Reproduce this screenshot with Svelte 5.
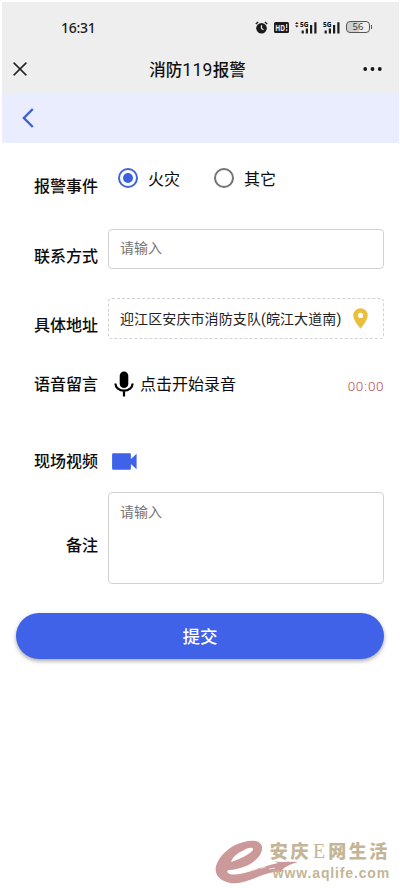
<script>
  let type = $state('fire');
  let contact = $state('');
  let address = $state('迎江区安庆市消防支队(皖江大道南)');
  let remark = $state('');

  const types = [
    { value: 'fire', label: '火灾' },
    { value: 'other', label: '其它' }
  ];
</script>

{#snippet signal()}
  <text x="0" y="5.8" font-size="7.5" font-weight="700" textLength="8.5" lengthAdjust="spacingAndGlyphs">5G</text>
  <path d="M2.7 9.5v3M6.9 7.5v5M11.1 4v8.5M15.4 1.2v11.3" stroke="#1c1c1c" stroke-width="2.2" />
{/snippet}

<div class="page">
  <header>
    <div class="status">
      <span class="time">16:31</span>
      <div class="status-icons">
        <svg class="alarm" width="13" height="13" viewBox="0 0 13 13">
          <circle cx="6.5" cy="7.2" r="5.3" fill="#1c1c1c" />
          <path d="M.8 3 3.2 1M9.8 1l2.4 2" stroke="#1c1c1c" stroke-width="1.4" />
          <path d="M6.5 4.2v3.3l2 1.3" fill="none" stroke="#eee" stroke-width="1.2" />
        </svg>
        <svg class="hd" width="15" height="11" viewBox="0 0 15 11">
          <rect width="15" height="11" rx="1.5" fill="#1c1c1c" />
          <text x="1.2" y="8.7" font-size="8.5" font-weight="700" fill="#eee" textLength="9.8" lengthAdjust="spacingAndGlyphs">HD</text>
          <path d="M12.7 2v4M12.7 7.3v1.6" stroke="#eee" stroke-width="1.1" />
        </svg>
        <svg class="sim1" width="22" height="19" viewBox="-5 -3 22 19">
          <path d="m-5 3.1 1.8-2 1.8 2zM-5 4.4l1.8 2 1.8-2z" fill="#1c1c1c" />
          {@render signal()}
        </svg>
        <svg class="sim2" width="17" height="19" viewBox="0 -3 17 19">
          {@render signal()}
        </svg>
        <span class="battery">56</span>
      </div>
    </div>

    <div class="titlebar">
      <svg width="14" height="14" viewBox="0 0 14 14">
        <path d="M.6.6l12.8 12.8M13.4.6.6 13.4" stroke="#222" stroke-width="1.5" />
      </svg>
      <h1>消防<span>119</span>报警</h1>
      <svg width="19" height="4" viewBox="0 0 19 4" fill="#151515">
        <circle cx="2.2" cy="2" r="1.9" />
        <circle cx="9.5" cy="2" r="1.9" />
        <circle cx="16.8" cy="2" r="1.9" />
      </svg>
    </div>
  </header>

  <nav>
    <svg width="12" height="20" viewBox="0 0 12 20">
      <path d="M10.8 1 1.9 10l8.9 9" fill="none" stroke="#3f62cc" stroke-width="2.4" />
    </svg>
  </nav>

  <form onsubmit={(e) => e.preventDefault()}>
    <div class="row event">
      <span class="label">报警事件</span>
      <div class="field radios">
        {#each types as item}
          <label class="radio">
            <input type="radio" name="type" value={item.value} bind:group={type} />
            <i class="dot" class:checked={type === item.value}></i>
            {item.label}
          </label>
        {/each}
      </div>
    </div>

    <div class="row contact">
      <span class="label">联系方式</span>
      <input class="field box" placeholder="请输入" bind:value={contact} />
    </div>

    <div class="row address">
      <span class="label">具体地址</span>
      <div class="field box dashed">
        <span>{address}</span>
        <svg width="15" height="21" viewBox="0 0 15 21">
          <path
            d="M7.5.2A7.2 7.2 0 0 0 .3 7.4C.3 12.7 7.5 20.5 7.5 20.5s7.2-7.8 7.2-13.1A7.2 7.2 0 0 0 7.5.2zm0 4.6a2.6 2.6 0 1 1 0 5.2 2.6 2.6 0 0 1 0-5.2z"
            fill="#e9bf3b"
          />
        </svg>
      </div>
    </div>

    <div class="row voice">
      <span class="label">语音留言</span>
      <div class="field record">
        <svg width="20" height="26" viewBox="0 0 20 26">
          <rect x="5.7" y=".5" width="8.6" height="16.5" rx="4.3" />
          <path d="M1.4 12.5a8.6 7.2 0 0 0 17.2 0M10 20v5.5" fill="none" stroke="#000" stroke-width="2.2" />
        </svg>
        <span>点击开始录音</span>
        <span class="timer">00<i>:</i>00</span>
      </div>
    </div>

    <div class="row video">
      <span class="label">现场视频</span>
      <div class="field camera">
        <svg width="25" height="17" viewBox="0 0 25 17" fill="#3f62e8">
          <path d="M1.3.2h16.4q1.2 0 1.2 1.2v4.5l5.7-5.2v15.6l-5.7-5.2v4.5q0 1.2-1.2 1.2H1.3q-1.2 0-1.2-1.2V1.4Q.1.2 1.3.2z" />
        </svg>
      </div>
    </div>

    <div class="row remark">
      <span class="label">备注</span>
      <textarea class="field box" placeholder="请输入" bind:value={remark}></textarea>
    </div>

    <button class="submit">提交</button>
  </form>

  <div class="watermark">
    <svg width="86" height="46" viewBox="0 0 86 46">
      <path
        fill="#cc999a"
        d="M16 22C25 19 35 14 38 10c1-3-4-3-9 0-6 3-11 6-13 12zM13 33c4 3 13 1 20-1 10-3 19-7 30-9l-4-2c8 2 14 0 24 1-7 2-12 4-15 7l-2 3c-5-1-13 1-21 4-12 5-21 8-30 7C5 41-1 35 1 26 4 16 15 5 29 2c9-3 19-1 18 7C46 20 30 29 14 30c-2 0-2 2-1 3z"
      />
      <path d="M35 31l7-2M45 28.500l6-2M54 29l6-1" stroke="#f1ded8" stroke-width="1.1" />
    </svg>
    <div class="brand">
      <span class="name">安庆<em>E</em>网生活</span>
      <span class="url">www.aqlife.com</span>
    </div>
  </div>
</div>

<style>
  :global(body) {
    background: #fff;
  }

  .page {
    position: relative;
    box-sizing: border-box;
    height: 888px;
    padding: 2px 1px 0 2px;
    overflow: hidden;
    font-family: Roboto, 'Noto Sans CJK SC', sans-serif;
    font-size: 16px;
    color: #0c0c0c;
  }

  svg {
    display: block;
    flex: none;
  }

  header {
    height: 91px;
    background: #eee;
  }

  /* Status bar */
  .status {
    display: flex;
    align-items: center;
    justify-content: space-between;
    height: 50px;
    padding: 0 29px 0 59px;
  }

  .time {
    font-family: 'Noto Sans', sans-serif;
    font-size: 14px;
    font-weight: 500;
    letter-spacing: -0.3px;
    color: #1c1c1c;
  }

  .status-icons {
    display: flex;
    align-items: center;
    font-family: 'Open Sans', sans-serif;
  }

  .hd {
    margin-left: 6px;
  }

  .sim1,
  .sim2 {
    margin-left: 6px;
  }

  .battery {
    position: relative;
    box-sizing: border-box;
    width: 24px;
    height: 12px;
    margin-left: 6px;
    border: 1px solid #555;
    border-radius: 4px;
    background: linear-gradient(90deg, #cfcfcf 56%, #eee 56%);
    font-size: 9.5px;
    line-height: 10px;
    text-align: center;
    color: #333;
  }

  .battery::after {
    content: '';
    position: absolute;
    top: 3px;
    right: -3px;
    width: 1.5px;
    height: 4px;
    background: #555;
  }

  /* Title bar */
  .titlebar {
    display: flex;
    align-items: center;
    justify-content: space-between;
    height: 34px;
    padding: 0 17px 0 11px;
  }

  h1 {
    margin: 0 0 0 5px;
    font-size: 16.5px;
    font-weight: 500;
    color: #111;
  }

  h1 span {
    font-size: 17.5px;
    font-weight: 400;
    letter-spacing: 0.3px;
  }

  nav {
    display: flex;
    align-items: center;
    height: 50px;
    padding-left: 20px;
    background: #eaedfe;
  }

  /* Form */
  form {
    padding: 15px 15px 0 0;
  }

  .row {
    display: flex;
    align-items: center;
    height: 40px;
  }

  .label {
    width: 96px;
    margin-right: 10px;
    padding-top: 2px;
    font-weight: 500;
    line-height: 24px;
    text-align: right;
  }

  .field {
    flex: 1;
    min-width: 0;
  }

  .contact .label,
  .address .label,
  .remark .label {
    padding-top: 15px;
  }

  .event .label {
    padding-top: 17px;
  }

  .contact {
    margin-top: 31px;
  }

  .address {
    height: 41px;
    margin-top: 29px;
  }

  .voice {
    margin-top: 25px;
  }

  .video {
    margin-top: 37px;
  }

  .remark {
    height: 92px;
    margin-top: 11px;
  }

  .radios {
    display: flex;
    gap: 34px;
    padding-left: 10px;
  }

  .radio {
    display: flex;
    align-items: center;
  }

  .radio input {
    position: absolute;
    opacity: 0;
  }

  .dot {
    display: grid;
    place-items: center;
    box-sizing: border-box;
    width: 20px;
    height: 20px;
    margin-right: 10px;
    border: 2px solid #747474;
    border-radius: 50%;
  }

  .dot.checked {
    border-color: #4165d4;
  }

  .dot.checked::after {
    content: '';
    width: 10px;
    height: 10px;
    border-radius: 50%;
    background: #3c61e0;
  }

  .box {
    box-sizing: border-box;
    height: 100%;
    margin: 0;
    padding: 0 11px;
    border: 1px solid #d2d2d2;
    border-radius: 4px;
    outline: none;
    background: #fff;
    font-family: inherit;
    font-size: 14px;
    line-height: 20px;
    color: #222;
  }

  input.box {
    padding-bottom: 2px;
  }

  .box::placeholder {
    color: #757575;
    opacity: 1;
  }

  textarea.box {
    padding-top: 9px;
    resize: none;
  }

  .dashed {
    display: flex;
    align-items: center;
    justify-content: space-between;
    padding-right: 15px;
    border-style: dashed;
    letter-spacing: 0.1px;
    white-space: nowrap;
  }

  .record {
    display: flex;
    align-items: center;
    padding-left: 6px;
  }

  .record svg {
    margin-right: 6px;
  }

  .record span {
    margin-bottom: 2px;
  }

  .record .timer {
    margin: 3px 0 0 auto;
    font-size: 13.5px;
    font-weight: 300;
    letter-spacing: 0.5px;
    color: #b34e4e;
  }

  .timer i {
    margin: 0 0.5px;
    font-style: normal;
  }

  .camera {
    padding-left: 4px;
  }

  .submit {
    display: block;
    width: 368px;
    height: 46px;
    margin: 29px 0 0 14px;
    padding: 0 0 2px;
    border: 0;
    border-radius: 23px;
    background: #3f62e8;
    box-shadow: 0 2px 4px rgba(0, 0, 0, 0.35);
    font-family: inherit;
    font-size: 17.5px;
    font-weight: 500;
    color: #fff;
  }

  /* Site mark laid over the page corner */
  .watermark {
    position: absolute;
    right: 9px;
    bottom: 5px;
    width: 176px;
    height: 43px;
  }

  .brand {
    position: absolute;
    top: 0;
    right: 1px;
    display: flex;
    flex-direction: column;
    color: #c4b597;
    white-space: nowrap;
  }

  .name {
    display: flex;
    align-items: center;
    justify-content: space-between;
    height: 23px;
    margin-left: -3px;
    font-size: 18px;
    font-weight: 900;
    letter-spacing: 2.6px;
    line-height: 23px;
  }

  .name em {
    font-family: 'Liberation Serif', serif;
    font-size: 20px;
    font-style: normal;
    font-weight: 400;
    letter-spacing: 1px;
  }

  .url {
    align-self: flex-end;
    font-family: 'Liberation Sans', sans-serif;
    font-size: 14px;
    font-weight: 700;
    letter-spacing: 0.85px;
    line-height: 20px;
  }
</style>
